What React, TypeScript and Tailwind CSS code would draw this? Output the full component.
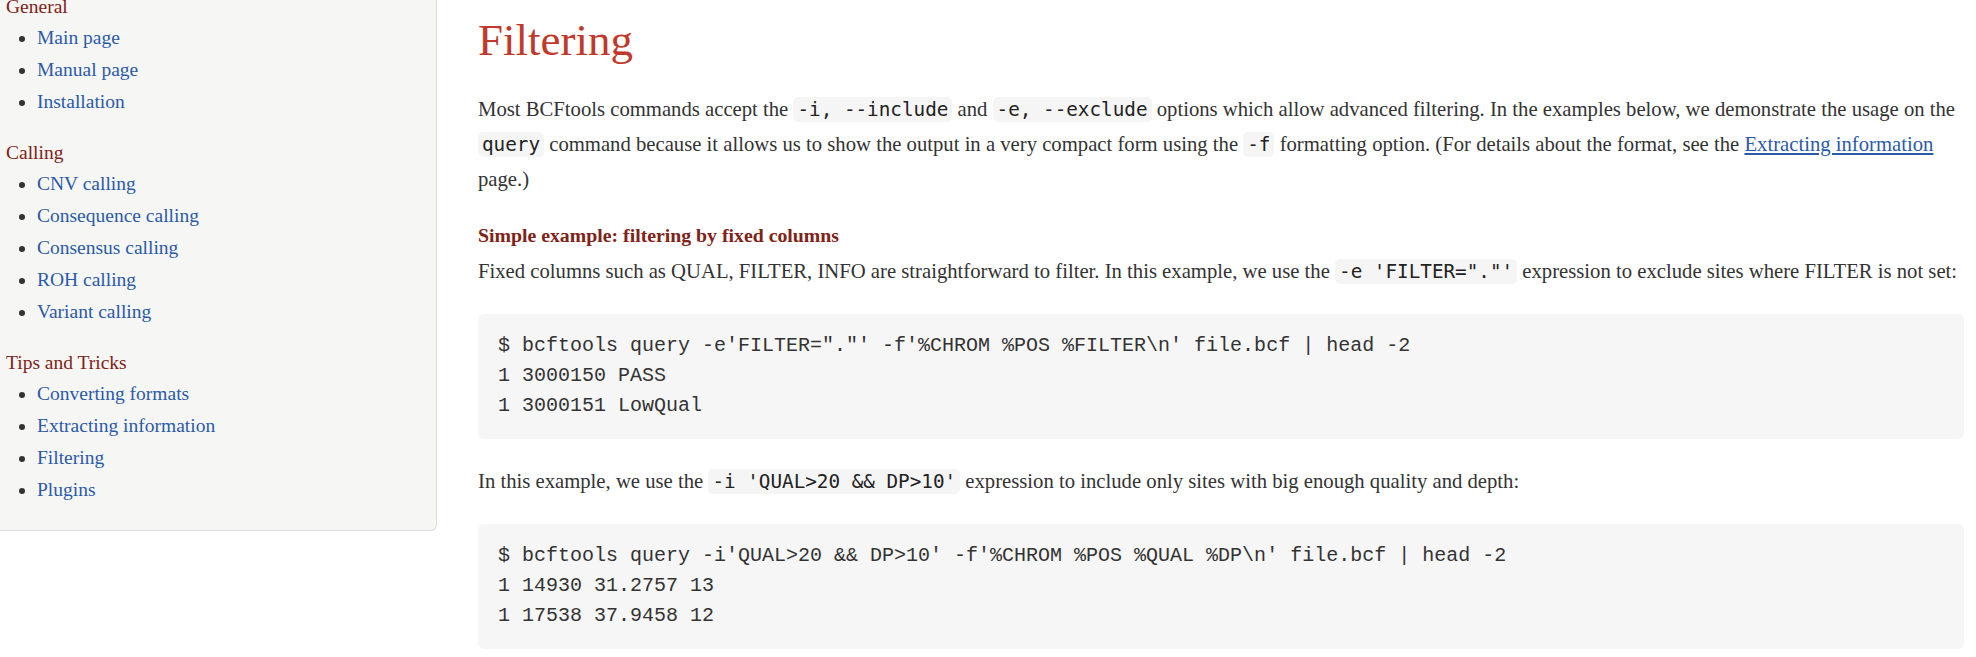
import React from 'react';

type NavSection = { title: string; items: string[] };

const sections: NavSection[] = [
  { title: 'General', items: ['Main page', 'Manual page', 'Installation'] },
  {
    title: 'Calling',
    items: ['CNV calling', 'Consequence calling', 'Consensus calling', 'ROH calling', 'Variant calling'],
  },
  {
    title: 'Tips and Tricks',
    items: ['Converting formats', 'Extracting information', 'Filtering', 'Plugins'],
  },
];

// inline code chip
const Code: React.FC<{ children: React.ReactNode }> = ({ children }) => (
  <code className="font-['DejaVu_Sans_Mono',monospace] text-[19.3px] text-[#222] bg-[#f5f5f5] rounded-[5px] px-[4px] py-[1px] whitespace-pre">
    {children}
  </code>
);

// code block
const Block: React.FC<{ lines: string[] }> = ({ lines }) => (
  <pre className="font-['Liberation_Mono',monospace] text-[20px] leading-[30px] text-[#333] bg-[#f6f6f6] rounded-[6px] pl-[20px] pt-[17px] pb-[18px] mb-[25px]">
    {lines.join('\n')}
  </pre>
);

const Sidebar: React.FC = () => (
  <aside className="w-[437px] shrink-0 self-start -mt-[8px] bg-[#f6f6f4] border-r border-b border-[#dcdcdc] rounded-br-[6px] pl-[6px] pb-[24px] font-['Liberation_Serif',serif] text-[19.5px]">
    {sections.map((s, i) => (
      <div key={s.title} className={i > 0 ? 'mt-[20px]' : ''}>
        <div className="leading-[30px] text-[#7e2317]">{s.title}</div>
        <ul className="list-disc pl-[31px] marker:text-[#333]">
          {s.items.map((item) => (
            <li key={item} className="leading-[32px]">
              <a href="#" className="text-[#2b5aa8]">
                {item}
              </a>
            </li>
          ))}
        </ul>
      </div>
    ))}
  </aside>
);

const App: React.FC = () => {
  return (
    <div className="flex w-full min-h-screen bg-white overflow-hidden">
      <Sidebar />

      <main className="flex-1 min-w-0 pl-[41px] pr-[12px] pt-[13px] font-['Liberation_Serif',serif] text-[#333]">
        <h1 className="text-[45px] leading-[54px] text-[#c0392b] mb-[25px]">Filtering</h1>

        <p className="text-[20.7px] leading-[34px] mb-[25px]">
          Most BCFtools commands accept the <Code>-i, --include</Code> and <Code>-e, --exclude</Code> options
          which allow advanced filtering. In the examples below, we demonstrate the usage on the{' '}
          <Code>query</Code> command because it allows us to show the output in a very compact form using the{' '}
          <Code>-f</Code> formatting option. (For details about the format, see the{' '}
          <a href="#" className="text-[#2b5aa8] underline">
            Extracting information
          </a>{' '}
          page.)
        </p>

        <h4 className="text-[19.8px] leading-[28px] font-bold text-[#7e2317] mb-[5px]">
          Simple example: filtering by fixed columns
        </h4>

        <p className="text-[20.7px] leading-[34px] mb-[25px]">
          Fixed columns such as QUAL, FILTER, INFO are straightforward to filter. In this example, we use the{' '}
          <Code>-e 'FILTER="."'</Code> expression to exclude sites where FILTER is not set:
        </p>

        <Block
          lines={[
            `$ bcftools query -e'FILTER="."' -f'%CHROM %POS %FILTER\\n' file.bcf | head -2`,
            '1 3000150 PASS',
            '1 3000151 LowQual',
          ]}
        />

        <p className="text-[20.7px] leading-[34px] mb-[25px]">
          In this example, we use the <Code>-i 'QUAL&gt;20 &amp;&amp; DP&gt;10'</Code> expression to include only
          sites with big enough quality and depth:
        </p>

        <Block
          lines={[
            `$ bcftools query -i'QUAL>20 && DP>10' -f'%CHROM %POS %QUAL %DP\\n' file.bcf | head -2`,
            '1 14930 31.2757 13',
            '1 17538 37.9458 12',
          ]}
        />
      </main>
    </div>
  );
};

export default App;
